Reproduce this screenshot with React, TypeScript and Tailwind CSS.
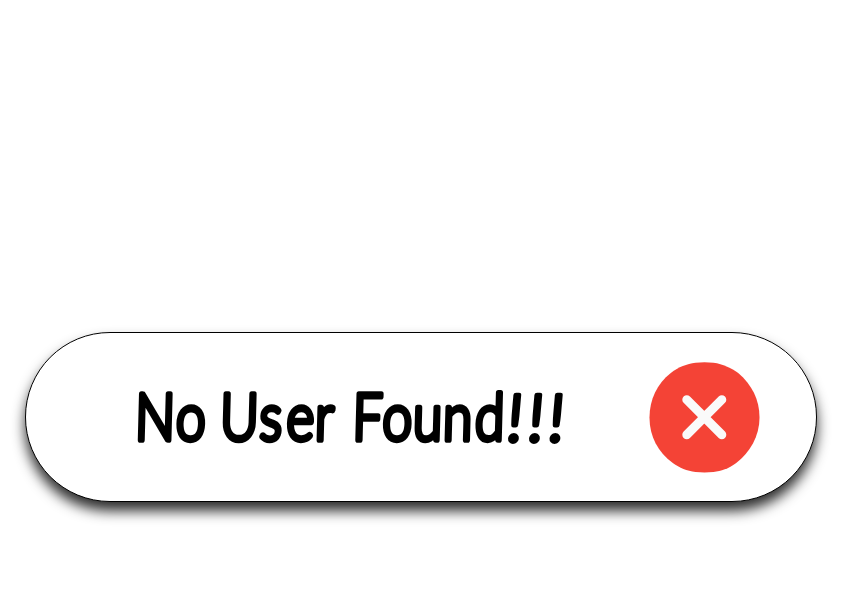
const letterX = {
  no: [134.5, 175.5],
  user: [219.5, 259, 286, 314.5],
  found: [352, 382, 412.5, 442.5, 474.5],
};

const squeeze = 0.82;
const place = (xs: number[]) => xs.map((x) => x / squeeze).join(' ');

function Message() {
  return (
    <svg
      width="460"
      height="120"
      viewBox="120 360 460 120"
      className="shrink-0 overflow-visible font-['Lato',sans-serif] text-[65px] font-light"
      fill="black"
      stroke="black"
      strokeWidth="5.6"
      strokeLinejoin="round"
    >
      <g transform={`translate(0 440) skewX(-1.5) scale(${squeeze} 1)`}>
        <text y="0" x={place(letterX.no)}>No</text>
        <text y="0" x={place(letterX.user)}>User</text>
        <text y="0" x={place(letterX.found)}>Found</text>
      </g>
      <g transform="translate(0 440.5) skewX(-5)" strokeWidth="4.8">
        <text y="0" x="505 526 546.5">!!!</text>
      </g>
    </svg>
  );
}

function ErrorIcon() {
  return (
    <svg width="111" height="111" viewBox="0 0 112 112" className="shrink-0">
      <path
        d="M47 .8Q56-.2 65 .8C75 2 82 6 90 11C104 23 111.5 38 111.5 56C111.5 75 102 91 88 102C80 108 73 110 65 111Q56 112 47 111C38 110 31 107 24 102C9 91 .5 75 .5 56C.5 38 8 22 22 11C30 5 38 2 47 .8Z"
        fill="#f44336"
      />
      <path d="M38.1 38L73.5 73.4M73.5 38L38.1 73.4" stroke="#fafafa" strokeWidth="9" strokeLinecap="round" />
    </svg>
  );
}

export default function App() {
  return (
    <main className="h-[596px] w-[843px] overflow-hidden bg-white pt-[332px] pl-[25px]">
      <div className="flex h-[170px] w-[792px] items-center rounded-full border border-black bg-white pl-[94px] shadow-[0_9px_13px_rgba(0,0,0,0.82)]">
        <div className="pt-[6px]"><Message /></div>
        <div className="ml-[69px] pt-px"><ErrorIcon /></div>
      </div>
    </main>
  );
}
